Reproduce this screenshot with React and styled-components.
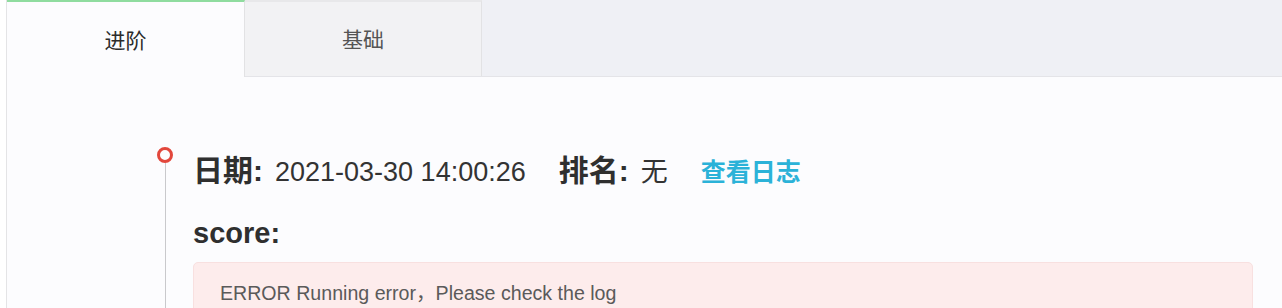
import React from 'react';
import styled, { createGlobalStyle } from 'styled-components';

const GlobalStyle = createGlobalStyle`
  html, body {
    margin: 0;
    padding: 0;
    background: #ffffff;
    font-family: "Liberation Sans", "Noto Sans CJK SC", sans-serif;
    color: #333333;
  }
`;

const Page = styled.div`
  padding-left: 6px;
  height: 308px;
  overflow: hidden;
`;

const Panel = styled.div`
  border-left: 1px solid #e4e4e6;
  background: #fcfcfe;
  height: 100%;
`;

const TabBar = styled.div`
  display: flex;
  height: 77px;
  background: #eff0f5;
  border-bottom: 1px solid #e4e4e8;
  box-sizing: border-box;
`;

const Tab = styled.div`
  width: ${p => p.$width}px;
  display: flex;
  align-items: center;
  justify-content: center;
  box-sizing: border-box;
  font-size: 21px;
  color: ${p => (p.$active ? '#2b2b2b' : '#555555')};
  background: ${p => (p.$active ? '#fcfcfe' : '#f2f2f4')};
  border-top: 2px solid ${p => (p.$active ? '#8fdc9f' : '#e8e8ea')};
  border-right: 1px solid #e2e2e4;
  margin-bottom: ${p => (p.$active ? '-1px' : '0')};
  padding-bottom: 2px;
`;

const Content = styled.div`
  padding: 70px 29px 0 150px;
`;

const TimelineItem = styled.div`
  display: flex;
  align-items: stretch;
`;

const Rail = styled.div`
  width: 16px;
  display: flex;
  flex-direction: column;
  align-items: center;
  margin-right: 20px;
`;

const Dot = styled.div`
  width: 16px;
  height: 16px;
  box-sizing: border-box;
  border-radius: 50%;
  border: 3px solid #e2473c;
  background: #fcfcfe;
`;

const Line = styled.div`
  flex: 1;
  width: 1px;
  background: #c9c9cc;
`;

const Body = styled.div`
  flex: 1;
  padding-top: 3px;
`;

const InfoRow = styled.div`
  display: flex;
  align-items: baseline;
  height: 42px;
  line-height: 42px;
`;

const Field = styled.div`
  display: flex;
  align-items: baseline;
  margin-right: 33px;
`;

const Label = styled.span`
  font-size: 30px;
  font-weight: 700;
  color: #2f2f2f;
`;

const Value = styled.span`
  font-size: 27px;
  color: #333333;
  margin-left: 12px;
`;

const LogLink = styled.a`
  font-size: 25px;
  font-weight: 600;
  color: #2bb2d8;
  text-decoration: none;
  cursor: pointer;
`;

const ScoreTitle = styled.div`
  margin-top: 21px;
  font-size: 29px;
  font-weight: 700;
  line-height: 40px;
  color: #2f2f2f;
`;

const ErrorBox = styled.div`
  margin-top: 9px;
  height: 70px;
  padding: 14px 26px 0;
  box-sizing: border-box;
  background: #fdecec;
  border: 1px solid #f8e0e0;
  border-radius: 5px;
  font-size: 19.6px;
  color: #5a5a5a;
`;

export default function App() {
  return (
    <>
      <GlobalStyle />
      <Page>
        <Panel>
          <TabBar>
            <Tab $active $width={238}>进阶</Tab>
            <Tab $width={237}>基础</Tab>
          </TabBar>
          <Content>
            <TimelineItem>
              <Rail>
                <Dot />
                <Line />
              </Rail>
              <Body>
                <InfoRow>
                  <Field>
                    <Label>日期:</Label>
                    <Value>2021-03-30 14:00:26</Value>
                  </Field>
                  <Field>
                    <Label>排名:</Label>
                    <Value>无</Value>
                  </Field>
                  <LogLink>查看日志</LogLink>
                </InfoRow>
                <ScoreTitle>score:</ScoreTitle>
                <ErrorBox>ERROR Running error，Please check the log</ErrorBox>
              </Body>
            </TimelineItem>
          </Content>
        </Panel>
      </Page>
    </>
  );
}
